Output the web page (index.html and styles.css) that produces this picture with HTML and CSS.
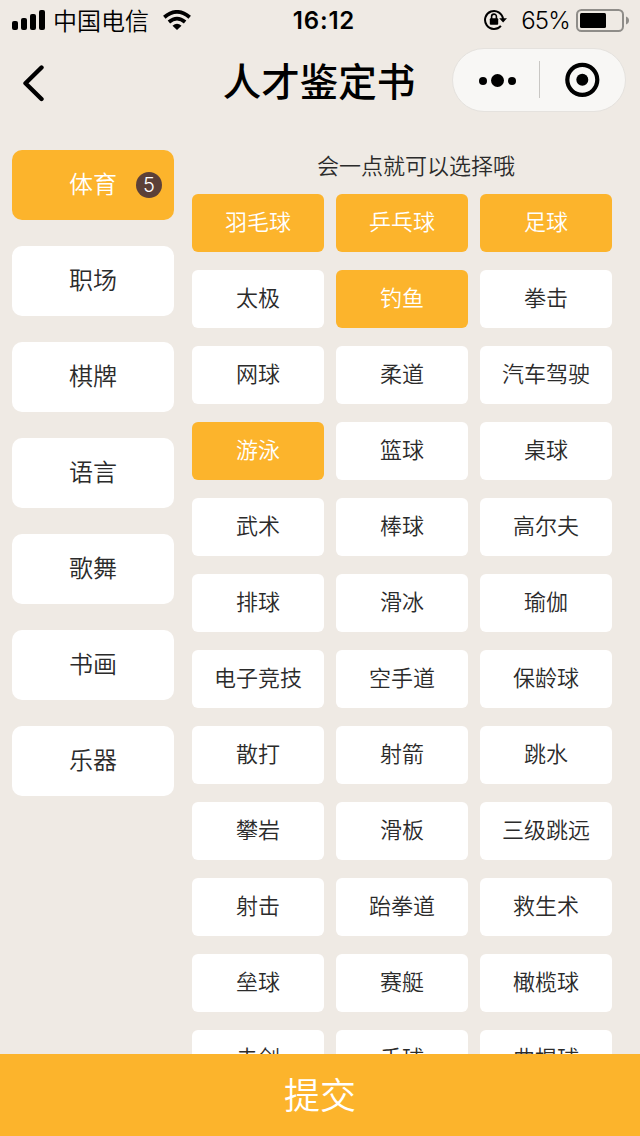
FILE: index.html
```html
<!DOCTYPE html>
<html lang="zh-CN">
<head>
<meta charset="utf-8">
<title>人才鉴定书</title>
<link rel="stylesheet" href="styles.css">
</head>
<body>
<div class="screen">
  <header class="status">
    <div class="status-left">
      <svg class="signal" width="34" height="20" viewBox="0 0 34 20"><rect x="0" y="11" width="6" height="9" rx="2"/><rect x="9" y="8" width="6" height="12" rx="2"/><rect x="18" y="4" width="6" height="16" rx="2"/><rect x="27" y="0" width="6" height="20" rx="2"/></svg>
      <span class="carrier">中国电信</span>
      <svg class="wifi" width="28" height="20" viewBox="0 0 28 20"><path d="M14 20 9.5 15.7Q14 12 18.5 15.7Z"/><path class="arc" d="M1.3 7.2Q14-3.4 26.7 7.2M5.9 12Q14 5.2 22.1 12"/></svg>
    </div>
    <span class="clock">16:12</span>
    <div class="status-right">
      <svg class="lock" width="24" height="22" viewBox="0 0 24 22"><path class="ring" d="M19 10A9 9 0 1 0 16.9 16.8"/><path d="M15.2 9.2H23L19.1 13.6Z"/><rect x="5.8" y="9.2" width="8.4" height="6.6" rx="1"/><path class="shackle" d="M7.6 10V7.5a2.4 2.4 0 0 1 4.8 0V10"/></svg>
      <span class="percent">65%</span>
      <svg class="battery" width="54" height="24" viewBox="0 0 54 24"><rect class="case" x="1" y="1" width="46" height="21" rx="4.5"/><rect x="4" y="4" width="26" height="15" rx="1.5"/><path class="cap" d="M50 7.6Q53 8.8 53 11.6T50 15.6Z"/></svg>
    </div>
  </header>
  <nav class="navbar">
    <svg class="back" width="24" height="38" viewBox="0 0 24 38"><path d="M19.5 3.5 3.5 19.3 19.5 35"/></svg>
    <h1 class="title">人才鉴定书</h1>
    <div class="capsule">
      <svg width="174" height="64" viewBox="0 0 174 64"><circle cx="31" cy="33" r="4"/><circle cx="45.5" cy="32.5" r="6.5"/><circle cx="60" cy="33" r="4"/><path class="divider" d="M87.5 13V50"/><circle class="target" cx="130.3" cy="31.8" r="15"/><circle cx="130.3" cy="31.8" r="6"/></svg>
    </div>
  </nav>
  <main class="content">
    <aside class="categories">
      <div class="category active">体育<span class="badge">5</span></div>
      <div class="category">职场</div>
      <div class="category">棋牌</div>
      <div class="category">语言</div>
      <div class="category">歌舞</div>
      <div class="category">书画</div>
      <div class="category">乐器</div>
    </aside>
    <section class="skills">
      <p class="hint">会一点就可以选择哦</p>
      <div class="grid">
        <div class="skill active">羽毛球</div><div class="skill active">乒乓球</div><div class="skill active">足球</div>
        <div class="skill">太极</div><div class="skill active">钓鱼</div><div class="skill">拳击</div>
        <div class="skill">网球</div><div class="skill">柔道</div><div class="skill">汽车驾驶</div>
        <div class="skill active">游泳</div><div class="skill">篮球</div><div class="skill">桌球</div>
        <div class="skill">武术</div><div class="skill">棒球</div><div class="skill">高尔夫</div>
        <div class="skill">排球</div><div class="skill">滑冰</div><div class="skill">瑜伽</div>
        <div class="skill">电子竞技</div><div class="skill">空手道</div><div class="skill">保龄球</div>
        <div class="skill">散打</div><div class="skill">射箭</div><div class="skill">跳水</div>
        <div class="skill">攀岩</div><div class="skill">滑板</div><div class="skill">三级跳远</div>
        <div class="skill">射击</div><div class="skill">跆拳道</div><div class="skill">救生术</div>
        <div class="skill">垒球</div><div class="skill">赛艇</div><div class="skill">橄榄球</div>
        <div class="skill">击剑</div><div class="skill">手球</div><div class="skill">曲棍球</div>
      </div>
    </section>
  </main>
  <footer class="submit">提交</footer>
</div>
</body>
</html>
```
FILE: styles.css
```css
* { box-sizing: border-box; }
body { margin: 0; }
.screen {
  width: 640px;
  height: 1136px;
  display: flex;
  flex-direction: column;
  overflow: hidden;
  background: #efeae4;
  color: #2b2b2b;
  font-family: "Noto Sans CJK SC", sans-serif;
  font-weight: 350;
}
.status {
  height: 40px;
  flex: none;
  display: grid;
  grid-template-columns: 1fr auto 1fr;
  align-items: center;
  padding: 0 10px 0 12px;
  color: #000;
  line-height: 40px;
}
.status-left, .status-right { display: flex; align-items: center; }
.status-right { justify-content: flex-end; }
.signal { margin-top: -1px; }
.wifi { margin-top: -2px; }
.carrier { margin: -2px 14px 0 7px; font-size: 24px; }
.clock {
  font: 600 24px/40px Inter, sans-serif;
  letter-spacing: 0.8px;
  padding-left: 6px;
}
.lock { margin-top: -1px; }
.percent { margin: 1px 6px 0 13px; font: 350 24px/40px Inter, sans-serif; letter-spacing: -0.8px; }
.arc { fill: none; stroke: #000; stroke-width: 3.8; }
.ring { fill: none; stroke: #000; stroke-width: 2; }
.shackle { fill: none; stroke: #000; stroke-width: 1.6; }
.case { fill: none; stroke: #8f8d89; stroke-width: 2; }
.cap { fill: #8f8d89; }
.navbar {
  height: 80px;
  flex: none;
  display: grid;
  grid-template-columns: 174px 1fr 174px;
  align-items: center;
  padding: 0 14px 0 22px;
}
.back { margin-top: 6px; fill: none; stroke: #000; stroke-width: 4.4; stroke-linecap: round; stroke-linejoin: round; }
.title {
  margin: -2px 0 0 -10px;
  color: #000;
  font-size: 38.5px;
  font-weight: 500;
  line-height: 56px;
  text-align: center;
}
.capsule {
  justify-self: end;
  width: 174px;
  height: 64px;
  border: 1px solid #e5e2de;
  border-radius: 32px;
  background: #f8f7f5;
}
.capsule svg { display: block; margin: -1px; }
.divider { stroke: #c9c7c4; stroke-width: 1; }
.target { fill: none; stroke: #000; stroke-width: 4.2; }
.content {
  flex: 1;
  min-height: 0;
  display: flex;
  gap: 18px;
  padding: 30px 28px 0 12px;
  overflow: hidden;
}
.categories { width: 162px; display: flex; flex-direction: column; gap: 26px; }
.category {
  position: relative;
  height: 70px;
  flex: none;
  border-radius: 10px;
  background: #fff;
  font-size: 24px;
  line-height: 65px;
  text-align: center;
}
.active { background: #fcb42c; color: #fff; }
.badge {
  position: absolute;
  top: 22px;
  right: 12px;
  width: 26px;
  height: 26px;
  border-radius: 50%;
  background: #5c4038;
  font: 300 20px/26px Inter, sans-serif;
}
.skills { flex: 1; }
.hint { margin: 0; height: 44px; padding-left: 28px; font-size: 22px; line-height: 28px; text-align: center; }
.grid { display: grid; grid-template-columns: repeat(3, 132px); grid-auto-rows: 58px; gap: 18px 12px; }
.skill { border-radius: 6px; background: #fff; font-size: 22px; line-height: 52px; text-align: center; }
.skill.active { background: #fcb42c; }
.submit {
  height: 82px;
  flex: none;
  background: #fcb42c;
  color: #fff;
  font-size: 36px;
  line-height: 78px;
  text-align: center;
}
```
